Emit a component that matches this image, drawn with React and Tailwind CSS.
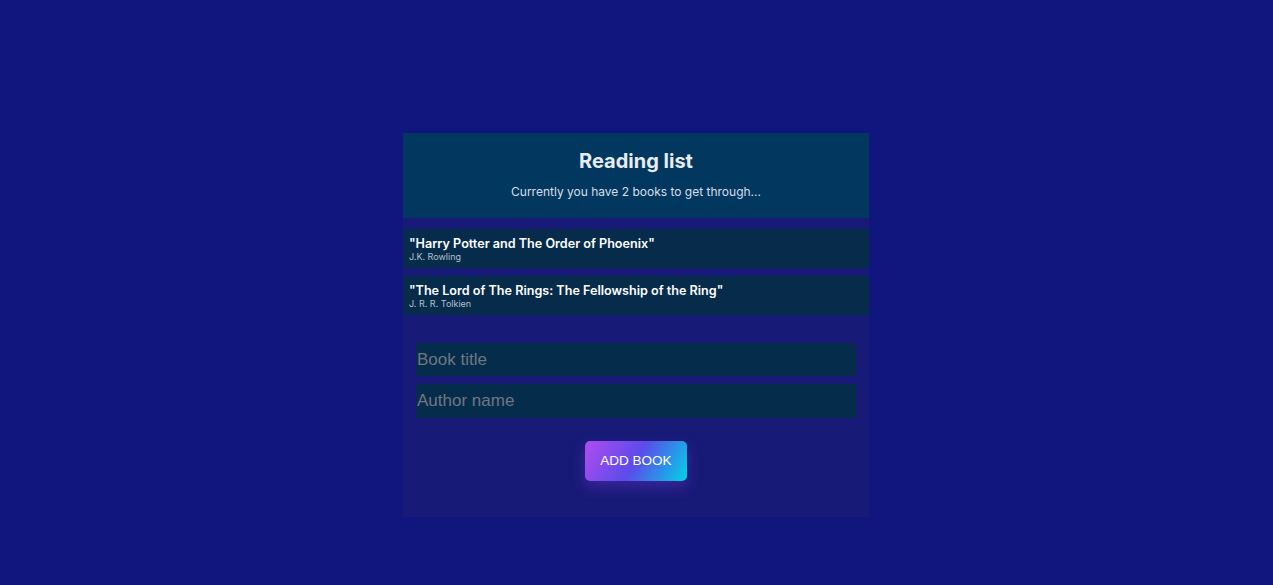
import React, { useState } from 'react';

function App() {
  const [books, setBooks] = useState([
    { title: 'Harry Potter and The Order of Phoenix', author: 'J.K. Rowling' },
    { title: 'The Lord of The Rings: The Fellowship of the Ring', author: 'J. R. R. Tolkien' },
  ]);
  const [title, setTitle] = useState('');
  const [author, setAuthor] = useState('');

  function addBook(e) {
    e.preventDefault();
    if (!title || !author) return;
    setBooks([...books, { title, author }]);
    setTitle('');
    setAuthor('');
  }

  return (
    <div className="min-h-[585px] bg-[#11167f] pt-[133px] pl-[403px]" style={{ fontFamily: 'Inter, sans-serif' }}>
      <div className="w-[466px] h-[384px] bg-[#181a78]">
        {/* HEADER */}
        <div className="h-[85px] bg-[#02375f] flex flex-col items-center pt-[16px]">
          <h1 className="text-[20px] font-bold text-[#e8ecf3] leading-[24px]">Reading list</h1>
          <p className="text-[12px] text-[#d8dfe9] mt-[11px] leading-[16px]">
            Currently you have {books.length} books to get through...
          </p>
        </div>

        {/* BOOKS */}
        <div className="flex flex-col gap-[8px] mt-[11px]">
          {books.map((book, index) => (
            <div key={index} className="h-[39px] bg-[#062b4b] rounded-[2px] px-[6px] pt-[7px]">
              <p className="text-[12.6px] font-semibold text-white leading-[15px]">"{book.title}"</p>
              <p className="text-[9px] text-[#b7c0cc] leading-[12px]">{book.author}</p>
            </div>
          ))}
        </div>

        {/* FORM */}
        <form className="px-[13px] pt-[28px] flex flex-col" onSubmit={addBook}>
          <input
            type="text"
            placeholder="Book title"
            value={title}
            onChange={(e) => setTitle(e.target.value)}
            className="h-[33px] w-full bg-[#062c4c] px-[1px] text-[17px] text-white placeholder:text-[#6f7780] outline-none"
            style={{ fontFamily: '"Liberation Sans", Arial, sans-serif' }}
          />
          <input
            type="text"
            placeholder="Author name"
            value={author}
            onChange={(e) => setAuthor(e.target.value)}
            className="h-[34px] w-full bg-[#062c4c] px-[1px] mt-[8px] text-[17px] text-white placeholder:text-[#6f7780] outline-none"
            style={{ fontFamily: '"Liberation Sans", Arial, sans-serif' }}
          />
          <div className="flex justify-center mt-[23px]">
            <button
              type="submit"
              className="w-[102px] h-[40px] rounded-[5px] text-white text-[13.5px] bg-[linear-gradient(120deg,#b04cf0_0%,#5a4cea_50%,#00d4e6_100%)] shadow-[0_6px_14px_rgba(120,60,220,0.35)]"
              style={{ fontFamily: '"Liberation Sans", Arial, sans-serif' }}
            >
              ADD BOOK
            </button>
          </div>
        </form>
      </div>
    </div>
  );
}

export default App;
